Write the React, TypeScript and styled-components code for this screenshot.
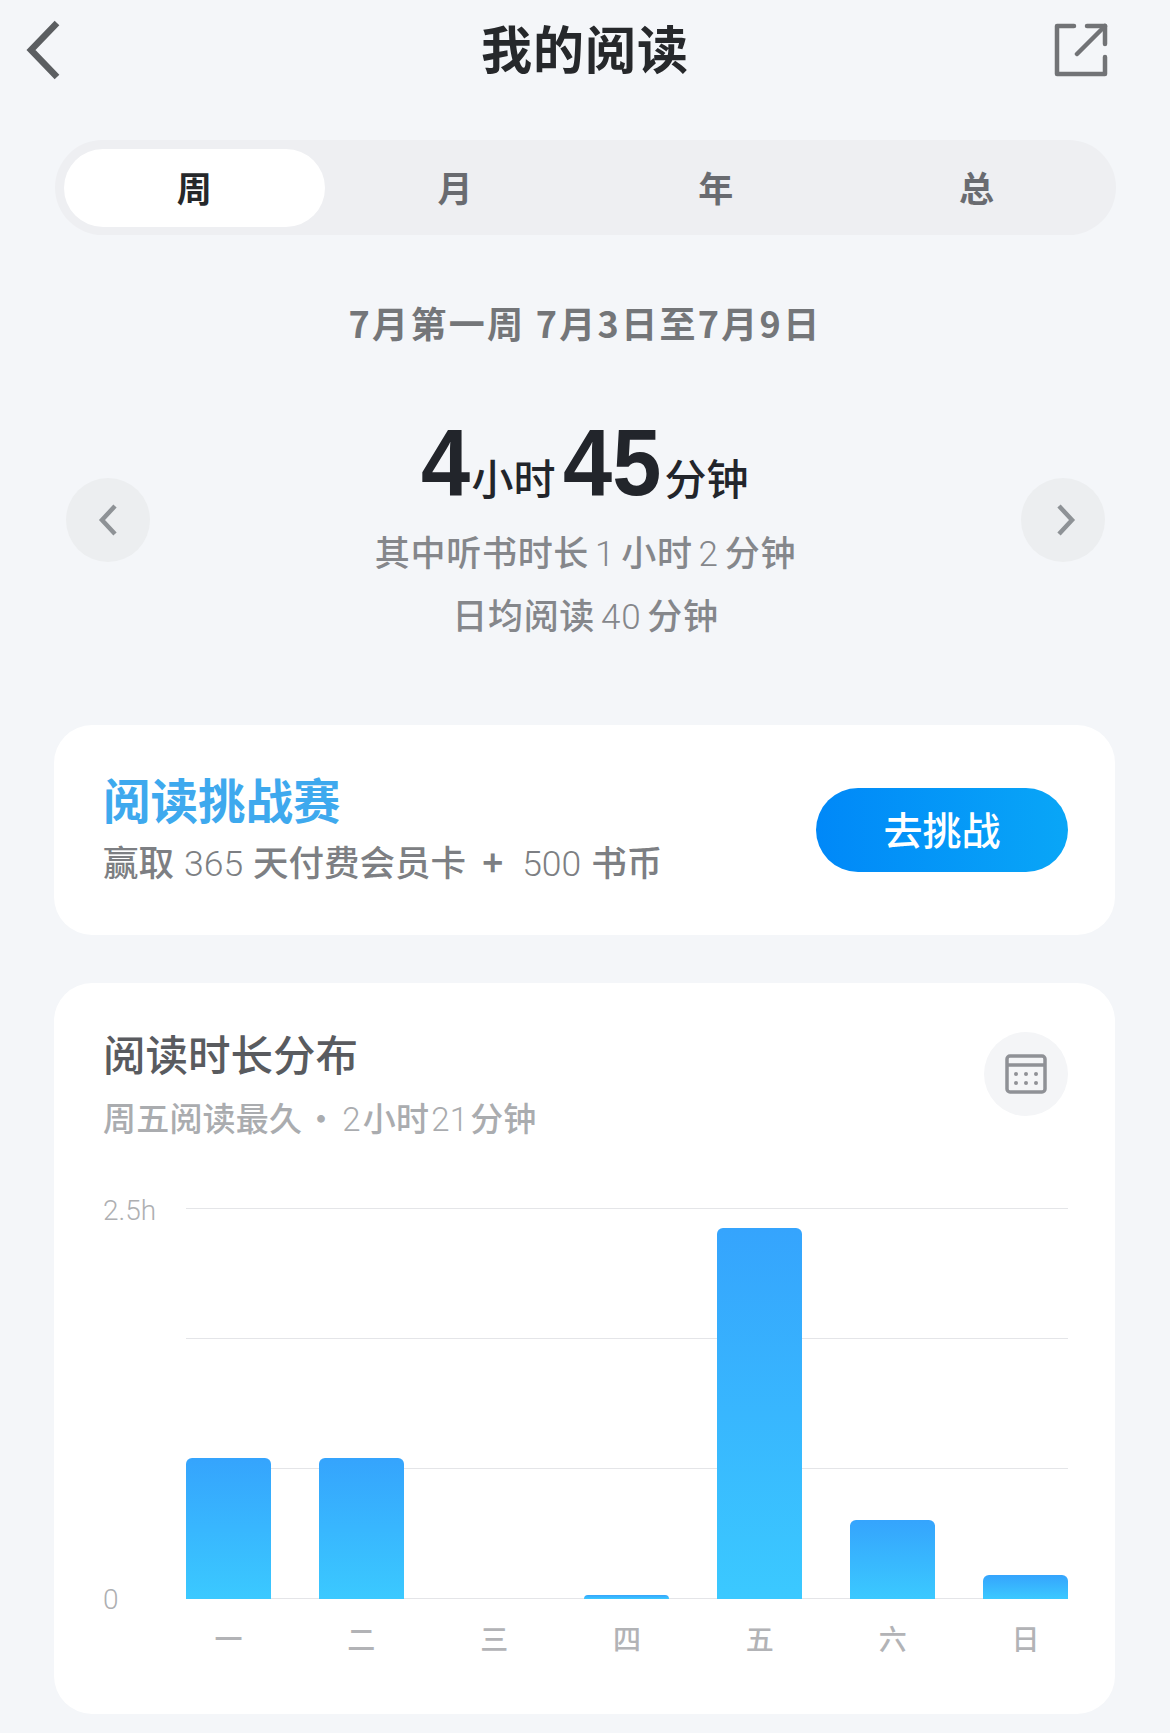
import React from "react";
import styled, { createGlobalStyle } from "styled-components";

const cjk = `"Noto Sans CJK SC", "Noto Sans", sans-serif`;
const latin = `"Roboto", "Noto Sans CJK SC", sans-serif`;

const Global = createGlobalStyle`
  html, body { margin: 0; padding: 0; background: #f4f6f9; }
  * { box-sizing: border-box; }
`;

const Page = styled.div`
  width: 1170px;
  height: 1733px;
  overflow: hidden;
  background: #f4f6f9;
  font-family: ${cjk};
`;

const Header = styled.header`
  height: 100px;
  padding: 0 24px;
  display: grid;
  grid-template-columns: 1fr auto 1fr;
  align-items: center;
`;

const HeaderEnd = styled.div`
  display: flex;
  justify-content: flex-end;
  padding-right: 38px;
`;

const BackSlot = styled.div`
  display: flex;
`;

const Title = styled.h1`
  margin: -6px 0 0;
  font-size: 51px;
  line-height: 94px;
  font-weight: 700;
  color: #26282b;
  letter-spacing: 1px;
`;

const Tabs = styled.div`
  margin: 40px 54px 0 55px;
  height: 95px;
  padding: 9px;
  border-radius: 48px;
  background: #eeeff2;
  display: grid;
  grid-template-columns: repeat(4, 1fr);
`;

const Tab = styled.div<{ $active?: boolean }>`
  display: flex;
  align-items: center;
  justify-content: center;
  height: 78px;
  padding-bottom: 4px;
  border-radius: 39px;
  font-size: 35px;
  font-weight: 700;
  color: ${(p) => (p.$active ? "#26282b" : "#696b70")};
  background: ${(p) => (p.$active ? "#ffffff" : "transparent")};
`;

const DateLine = styled.div`
  margin-top: 67px;
  text-align: center;
  font-size: 36px;
  line-height: 40px;
  font-weight: 700;
  color: #747679;
  letter-spacing: 2.3px;
`;

const Hero = styled.section`
  margin-top: 65px;
  padding: 0 65px 0 66px;
  height: 318px;
  display: flex;
  justify-content: space-between;
  align-items: flex-start;
`;

const RoundButton = styled.div<{ $top: number; $bg: string }>`
  width: 84px;
  height: 84px;
  margin-top: ${(p) => p.$top}px;
  border-radius: 50%;
  background: ${(p) => p.$bg};
  display: flex;
  align-items: center;
  justify-content: center;
  flex: none;
`;

const Stats = styled.div`
  display: flex;
  flex-direction: column;
  align-items: center;
`;

const BigLine = styled.div`
  display: flex;
  align-items: baseline;
  height: 112px;
  padding-left: 4px;
  line-height: 110px;
  color: #22252b;
`;

const BigNumber = styled.span<{ $width: number }>`
  display: inline-block;
  width: ${(p) => p.$width}px;
  font-family: "Liberation Sans", sans-serif;
  font-size: 95px;
  font-weight: 700;
  white-space: nowrap;
  transform: scaleX(0.93);
  transform-origin: left center;
`;

const BigUnit = styled.span<{ $gap: number }>`
  font-size: 42px;
  font-weight: 500;
  margin: 0 ${(p) => p.$gap}px 0 4px;
`;

const StatLine = styled.div`
  font-size: 35px;
  line-height: 63px;
  font-weight: 500;
  color: #85878b;
  letter-spacing: 0.7px;
`;

const Thin = styled.span`
  font-family: ${latin};
  font-weight: 300;
  line-height: 1;
  margin: 0 6px;
`;

const Card = styled.section<{ $top: number }>`
  margin: ${(p) => p.$top}px 55px 0 54px;
  background: #ffffff;
  border-radius: 38px;
`;

const ChallengeBody = styled.div`
  height: 210px;
  padding: 0 47px 0 49px;
  display: flex;
  align-items: center;
  justify-content: space-between;
`;

const ChallengeText = styled.div`
  display: flex;
  flex-direction: column;
`;

const ChallengeTitle = styled.div`
  margin-top: -7px;
  font-size: 47.5px;
  line-height: 62px;
  font-weight: 700;
  color: #3ea9ee;
`;

const ChallengeSub = styled.div`
  margin-top: 6px;
  font-size: 35.5px;
  line-height: 50px;
  font-weight: 500;
  color: #7d7f83;
  white-space: pre;
`;

const Light = styled.span`
  font-family: ${latin};
  font-weight: 300;
  line-height: 1;
  margin: 0 2px;
`;

const Plus = styled.span`
  font-weight: 700;
  margin: 0 9px 0 8px;
`;

const CTA = styled.div`
  width: 252px;
  height: 84px;
  padding-bottom: 4px;
  border-radius: 42px;
  background: linear-gradient(90deg, #0088f8, #09a6f7);
  color: #fff;
  font-size: 39px;
  font-weight: 500;
  display: flex;
  align-items: center;
  justify-content: center;
`;

const ChartCard = styled(Card)`
  height: 731px;
  padding: 49px 47px 0 49px;
`;

const ChartHead = styled.div`
  display: flex;
  justify-content: space-between;
  align-items: flex-start;
`;

const ChartTitle = styled.div`
  margin-top: -4px;
  font-size: 42.5px;
  line-height: 50px;
  font-weight: 500;
  color: #595b5f;
`;

const ChartSub = styled.div`
  margin-top: 16px;
  font-size: 33px;
  line-height: 46px;
  font-weight: 500;
  color: #aaacaf;
  letter-spacing: 0.2px;
`;

const Dot = styled.span`
  display: inline-block;
  width: 38px;
  text-align: center;
`;

const ChartArea = styled.div`
  margin-top: 54px;
  display: flex;
`;

const YAxis = styled.div`
  width: 83px;
  height: 421px;
  padding-top: 2px;
  display: flex;
  flex-direction: column;
  justify-content: space-between;
  font-family: ${latin};
  font-size: 28px;
  font-weight: 300;
  line-height: 30px;
  color: #aeafb2;
`;

const Plot = styled.div`
  flex: 1;
  display: flex;
  flex-direction: column;
`;

const BarsArea = styled.div`
  position: relative;
  height: 391px;
  margin-top: 14px;
`;

const GridLines = styled.div`
  position: absolute;
  inset: 0;
  display: flex;
  flex-direction: column;
  justify-content: space-between;
`;

const GridLine = styled.i`
  display: block;
  height: 1px;
  background: #e4e5e8;
`;

const Bars = styled.div`
  position: absolute;
  inset: 0;
  display: flex;
  justify-content: space-between;
  align-items: flex-end;
`;

const Bar = styled.div`
  width: 85px;
  border-radius: 6px 6px 0 0;
  background: linear-gradient(180deg, #35a4fd, #3bc9ff);
`;

const Days = styled.div`
  margin-top: 23px;
  display: flex;
  justify-content: space-between;
`;

const Day = styled.span`
  width: 85px;
  text-align: center;
  font-size: 28px;
  line-height: 32px;
  font-weight: 500;
  color: #b2b3b6;
`;

const bars = [141, 141, 0, 4, 371, 79, 24];
const days = ["一", "二", "三", "四", "五", "六", "日"];

export default function App() {
  return (
    <Page>
      <Global />
      <Header>
        <BackSlot>
          <svg width="40" height="60" viewBox="0 0 40 60" fill="none" stroke="#5b5e61" strokeWidth="6.5" strokeLinejoin="miter">
            <path d="M33 3 L7 30 L33 57" />
          </svg>
        </BackSlot>
        <Title>我的阅读</Title>
        <HeaderEnd>
          <svg width="54" height="54" viewBox="0 0 54 54" fill="none" stroke="#717376" strokeWidth="4.5" strokeLinecap="round" strokeLinejoin="round">
            <path d="M20 3 H3 V51 H51 V34" />
            <path d="M33 3 H51 V21" />
            <path d="M51 3 L23 31" />
          </svg>
        </HeaderEnd>
      </Header>

      <Tabs>
        <Tab $active>周</Tab>
        <Tab>月</Tab>
        <Tab>年</Tab>
        <Tab>总</Tab>
      </Tabs>

      <DateLine>7月第一周 7月3日至7月9日</DateLine>

      <Hero>
        <RoundButton $top={71} $bg="#eceef0">
          <svg width="20" height="32" viewBox="0 0 20 32" fill="none" stroke="#8e9296" strokeWidth="4.5">
            <path d="M17 2 L4 16 L17 30" />
          </svg>
        </RoundButton>
        <Stats>
          <BigLine>
            <BigNumber $width={46}>4</BigNumber>
            <BigUnit $gap={8}>小时</BigUnit>
            <BigNumber $width={97}>45</BigNumber>
            <BigUnit $gap={5}>分钟</BigUnit>
          </BigLine>
          <StatLine>
            其中听书时长<Thin>1</Thin>小时<Thin>2</Thin>分钟
          </StatLine>
          <StatLine>
            日均阅读<Thin>40</Thin>分钟
          </StatLine>
        </Stats>
        <RoundButton $top={71} $bg="#eceef0">
          <svg width="26" height="32" viewBox="0 0 26 32" fill="none" stroke="#8e9296" strokeWidth="4.5">
            <path d="M9 2 L22 16 L9 30" />
          </svg>
        </RoundButton>
      </Hero>

      <Card $top={0}>
        <ChallengeBody>
          <ChallengeText>
            <ChallengeTitle>阅读挑战赛</ChallengeTitle>
            <ChallengeSub>
              赢取 <Light>365</Light> 天付费会员卡<Plus> + </Plus><Light>500</Light> 书币
            </ChallengeSub>
          </ChallengeText>
          <CTA>去挑战</CTA>
        </ChallengeBody>
      </Card>

      <ChartCard $top={48}>
        <ChartHead>
          <div>
            <ChartTitle>阅读时长分布</ChartTitle>
            <ChartSub>
              周五阅读最久<Dot>·</Dot><Light>2</Light>小时<Light>21</Light>分钟
            </ChartSub>
          </div>
          <RoundButton $top={0} $bg="#f4f5f7">
            <svg width="42" height="40" viewBox="0 0 42 40" fill="none">
              <rect x="2" y="2" width="38" height="36" rx="3" stroke="#8f9196" strokeWidth="3.5" />
              <path d="M2 11 H40" stroke="#8f9196" strokeWidth="3.5" />
              <g fill="#8f9196">
                <circle cx="11" cy="20" r="2" />
                <circle cx="21" cy="20" r="2" />
                <circle cx="31" cy="20" r="2" />
                <circle cx="11" cy="29" r="2" />
                <circle cx="21" cy="29" r="2" />
                <circle cx="31" cy="29" r="2" />
              </g>
            </svg>
          </RoundButton>
        </ChartHead>
        <ChartArea>
          <YAxis>
            <span>2.5h</span>
            <span>0</span>
          </YAxis>
          <Plot>
            <BarsArea>
              <GridLines>
                <GridLine />
                <GridLine />
                <GridLine />
                <GridLine />
              </GridLines>
              <Bars>
                {bars.map((h, i) => (
                  <Bar key={days[i]} style={{ height: h }} />
                ))}
              </Bars>
            </BarsArea>
            <Days>
              {days.map((d) => (
                <Day key={d}>{d}</Day>
              ))}
            </Days>
          </Plot>
        </ChartArea>
      </ChartCard>
    </Page>
  );
}
